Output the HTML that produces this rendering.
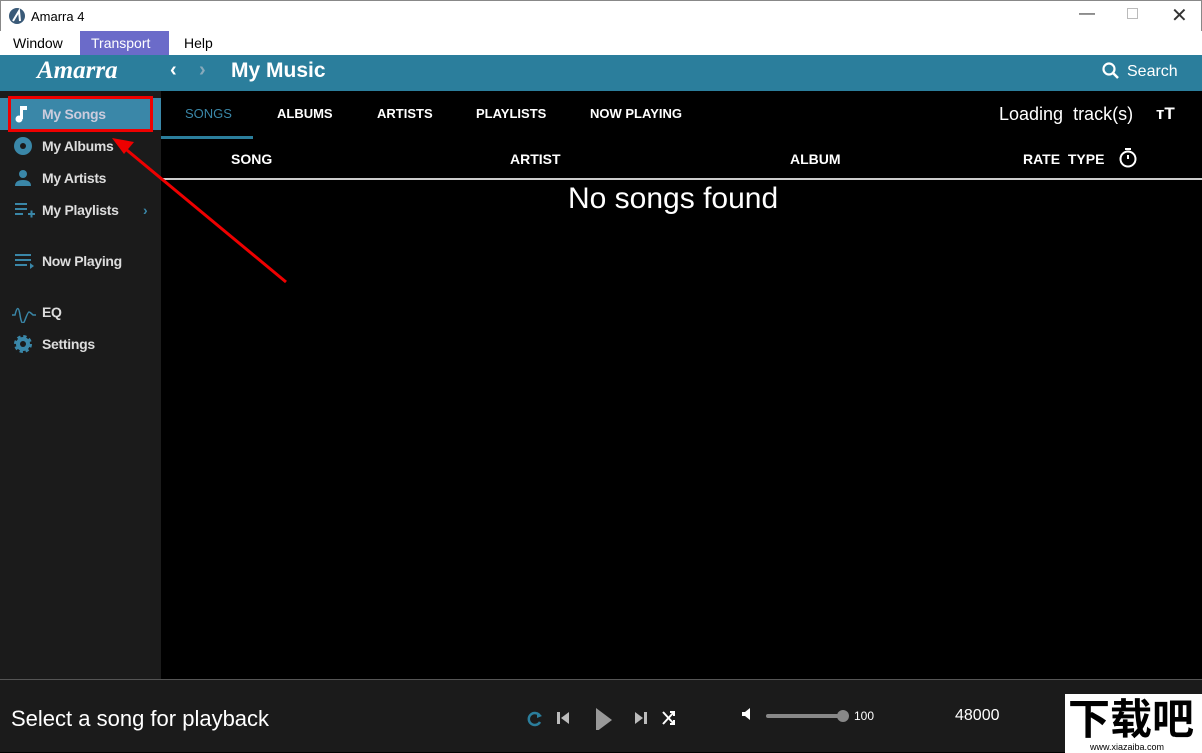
<!DOCTYPE html>
<html><head><meta charset="utf-8"><style>
*{margin:0;padding:0;box-sizing:border-box}
body{width:1202px;height:752px;overflow:hidden;background:#000;font-family:"Liberation Sans",sans-serif;position:relative}
.abs{position:absolute}
#title{left:0;top:0;width:1202px;height:31px;background:#fff;border:1px solid #888;border-bottom:none}
#menu{left:0;top:31px;width:1202px;height:24px;background:#fff;font-size:14px;color:#000}
#menu span{position:absolute;top:0;height:24px;line-height:24px}
#hdr{left:0;top:55px;width:1202px;height:36px;background:#2b7e9c}
#side{left:0;top:91px;width:161px;height:588px;background:#1b1b1b}
.nav{position:absolute;left:0;width:161px;height:32px;color:#ddd;font-weight:bold;font-size:14px;line-height:32px;padding-left:42px;letter-spacing:-0.3px}
.nav svg{position:absolute;left:13px;top:7px}
.tab{position:absolute;top:106px;font-weight:bold;font-size:13px;color:#fff}
.col{position:absolute;top:151px;font-weight:bold;font-size:14px;color:#fff}
#bot{left:0;top:679px;width:1202px;height:73px;background:#1b1b1b;border-top:1px solid #555}
</style></head><body>
<div id="title" class="abs">
 <svg class="abs" style="left:8px;top:7px" width="16" height="16"><circle cx="8" cy="8" r="8" fill="#3a5a78"/><path d="M4 13L10 3L11 13" stroke="#fff" stroke-width="2" fill="none"/></svg>
 <span class="abs" style="left:30px;top:8px;font-size:13px">Amarra 4</span>
 <span class="abs" style="left:1078px;top:4px;font-size:16px;color:#333">—</span>
 <span class="abs" style="left:1126px;top:7px;width:11px;height:11px;border:1px solid #bbb"></span>
 <span class="abs" style="left:1170px;top:2px;font-size:20px;color:#333">✕</span>
</div>
<div id="menu" class="abs">
 <span style="left:13px">Window</span>
 <span style="left:80px;width:89px;background:#6b6bc9;color:#fff;padding-left:11px">Transport</span>
 <span style="left:184px">Help</span>
</div>
<div id="hdr" class="abs">
 <span class="abs" style="left:37px;top:2px;font-family:'Liberation Serif',serif;font-style:italic;font-weight:bold;font-size:25px;color:#fff">Amarra</span>
 <span class="abs" style="left:170px;top:4px;font-size:20px;color:#fff;font-weight:bold">‹</span>
 <span class="abs" style="left:199px;top:4px;font-size:20px;color:#8ab;font-weight:bold">›</span>
 <span class="abs" style="left:231px;top:4px;font-size:21px;color:#fff;font-weight:bold">My Music</span>
 <svg class="abs" style="left:1101px;top:6px" width="20" height="20"><circle cx="8" cy="8" r="5.5" stroke="#fff" stroke-width="2.2" fill="none"/><path d="M12 12L17 17" stroke="#fff" stroke-width="2.5"/></svg>
 <span class="abs" style="left:1127px;top:8px;font-size:16px;color:#fff">Search</span>
</div>
<div id="side" class="abs">
 <div class="nav" style="top:7px;background:#3a87a8;color:#ccd">
  <svg width="16" height="18"><rect x="7" y="1" width="3" height="13" fill="#fff"/><path d="M9 1h5v4h-5z" fill="#fff"/><circle cx="6" cy="14" r="3.5" fill="#fff"/></svg>My Songs</div>
 <div class="nav" style="top:39px"><svg width="20" height="20"><circle cx="10" cy="9" r="9" fill="#3a87a8"/><circle cx="10" cy="9" r="3" fill="#1b1b1b"/></svg>My Albums</div>
 <div class="nav" style="top:71px"><svg width="20" height="20"><circle cx="10" cy="5" r="4" fill="#3a87a8"/><path d="M2 17q0-6 8-6t8 6z" fill="#3a87a8"/></svg>My Artists</div>
 <div class="nav" style="top:103px"><svg width="22" height="18"><path d="M2 3h12M2 8h12M2 13h8M15 13h7M18.5 9.5v7" stroke="#3a87a8" stroke-width="2"/></svg>My Playlists<span style="position:absolute;left:143px;color:#3a87a8">›</span></div>
 <div class="nav" style="top:154px"><svg width="22" height="18"><path d="M2 3h16M2 8h16M2 13h12" stroke="#3a87a8" stroke-width="2"/><path d="M17 11l4 3l-4 3z" fill="#3a87a8"/></svg>Now Playing</div>
 <div class="nav" style="top:205px"><svg width="26" height="20" style="left:11px"><path d="M1 12h3q3-13 5 0t5 5t4-8t4 3h3" stroke="#3a87a8" stroke-width="1.5" fill="none"/></svg>EQ</div>
 <div class="nav" style="top:237px"><svg width="20" height="20"><circle cx="10" cy="9" r="7" fill="#3a87a8" stroke="#3a87a8" stroke-width="4" stroke-dasharray="3 2.5"/><circle cx="10" cy="9" r="3" fill="#1b1b1b"/></svg>Settings</div>
</div>
<span class="tab" style="left:185px;color:#3a87a8;font-weight:normal">SONGS</span>
<div class="abs" style="left:161px;top:136px;width:92px;height:3px;background:#2b7e9c"></div>
<span class="tab" style="left:277px">ALBUMS</span>
<span class="tab" style="left:377px">ARTISTS</span>
<span class="tab" style="left:476px">PLAYLISTS</span>
<span class="tab" style="left:590px">NOW PLAYING</span>
<span class="abs" style="left:999px;top:104px;font-size:18px;color:#fff">Loading&nbsp; track(s)</span>
<span class="abs" style="left:1156px;top:104px;font-size:17px;color:#fff;font-weight:bold">тT</span>
<span class="col" style="left:231px">SONG</span>
<span class="col" style="left:510px">ARTIST</span>
<span class="col" style="left:790px">ALBUM</span>
<span class="col" style="left:1023px">RATE&nbsp; TYPE</span>
<svg class="abs" style="left:1118px;top:147px" width="20" height="22"><circle cx="10" cy="12" r="7.5" stroke="#fff" stroke-width="2" fill="none"/><path d="M7 2h6M10 12V8" stroke="#fff" stroke-width="2"/></svg>
<div class="abs" style="left:161px;top:178px;width:1041px;height:2px;background:#ccc"></div>
<span class="abs" style="left:568px;top:182px;font-size:30px;color:#fff">No songs found</span>
<div id="bot" class="abs">
 <span class="abs" style="left:11px;top:26px;font-size:22px;color:#fff">Select a song for playback</span>
 <svg class="abs" style="left:525px;top:28px" width="160" height="22">
  <path d="M15 8a6 6 0 1 0 0 6" stroke="#2b7e9c" stroke-width="2.5" fill="none"/><path d="M12 4l5 4l-5 2z" fill="#2b7e9c"/>
  <rect x="32" y="4" width="3" height="12" fill="#bbb"/><path d="M44 4v12l-8-6z" fill="#bbb"/>
  <path d="M71 0v24l16-12z" fill="#999"/>
  <path d="M110 4v12l8-6z" fill="#bbb"/><rect x="119" y="4" width="3" height="12" fill="#bbb"/>
  <path d="M138 4l11 12M138 16l11-12M145 4h4v4M145 16h4v-4" stroke="#fff" stroke-width="2" fill="none"/>
 </svg>
 <svg class="abs" style="left:741px;top:27px" width="14" height="14"><path d="M1 5h3l5-4v12l-5-4h-3z" fill="#fff"/></svg>
 <div class="abs" style="left:766px;top:34px;width:76px;height:4px;background:#888;border-radius:2px"></div>
 <div class="abs" style="left:837px;top:30px;width:12px;height:12px;background:#888;border-radius:6px"></div>
 <span class="abs" style="left:854px;top:29px;font-size:12px;color:#fff">100</span>
 <span class="abs" style="left:955px;top:27px;font-size:16px;color:#fff">48000</span>
 <div class="abs" style="left:1065px;top:14px;width:137px;height:59px;background:#fff"></div>
 <span class="abs" style="left:1068px;top:12px;font-size:42px;font-weight:bold;color:#000;font-family:'Noto Sans CJK SC',sans-serif;line-height:50px">下载吧</span>
 <span class="abs" style="left:1090px;top:62px;font-size:9px;color:#000">www.xiazaiba.com</span>
</div>
<div class="abs" style="left:8px;top:96px;width:145px;height:36px;border:3px solid #e00"></div>
<svg class="abs" style="left:0;top:0" width="400" height="300"><path d="M286 282L122 146" stroke="#e00" stroke-width="3"/><path d="M112 138l22 4l-10 12z" fill="#e00"/></svg>
</body></html>
